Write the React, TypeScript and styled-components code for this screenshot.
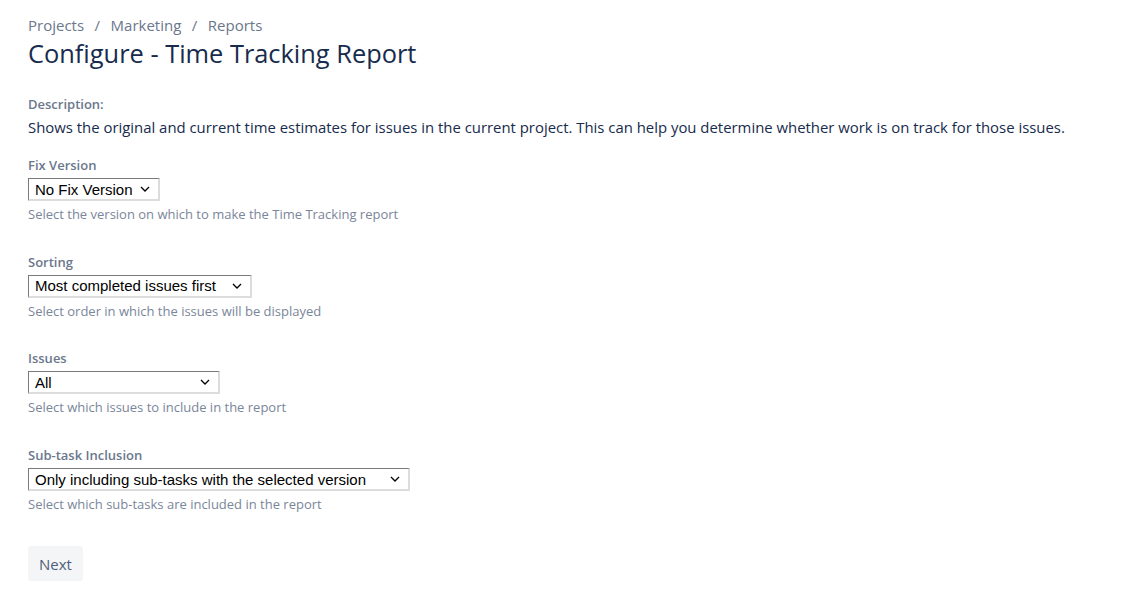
import React from "react";
import styled, { createGlobalStyle } from "styled-components";

const Global = createGlobalStyle`
  html, body { margin: 0; padding: 0; background: #fff; }
  body { font-family: "Open Sans", "Noto Sans", sans-serif; color: #172b4d; }
`;

const Page = styled.div`
  padding: 14px 28px 0 28px;
  display: flex;
  flex-direction: column;
`;

const Breadcrumbs = styled.nav`
  display: flex;
  align-items: center;
  font-size: 15px;
  line-height: 22px;
  color: #6b778c;
`;

const Sep = styled.span`
  padding: 0 10.5px;
`;

const Title = styled.h1`
  margin: 1px 0 0 0;
  font-size: 25.4px;
  font-weight: 400;
  line-height: 32px;
  color: #172b4d;
`;

const DescLabel = styled.div`
  margin-top: 26px;
  font-size: 13px;
  font-weight: 600;
  line-height: 18px;
  color: #6b778c;
`;

const DescText = styled.p`
  margin: 3px 0 0 0;
  font-size: 14.9px;
  line-height: 22px;
  color: #172b4d;
`;

const Field = styled.div<{ $first?: boolean }>`
  display: flex;
  flex-direction: column;
  align-items: flex-start;
  margin-top: ${(p) => (p.$first ? "18px" : "29.7px")};
`;

const Label = styled.label`
  font-size: 13px;
  font-weight: 600;
  line-height: 18px;
  color: #6b778c;
`;

const SelectBox = styled.div<{ $w: number }>`
  margin-top: 4px;
  box-sizing: border-box;
  width: ${(p) => p.$w}px;
  height: 23px;
  display: flex;
  align-items: center;
  justify-content: space-between;
  padding: 0 8px 0 6px;
  border-style: solid;
  border-width: 1px 2px 2px 1px;
  border-color: #7a7a7a #dcdcdc #dcdcdc #7a7a7a;
  font-family: "Liberation Sans", Arial, sans-serif;
  font-size: 15px;
  color: #000;
  background: #fff;
`;

const Help = styled.div`
  margin-top: 4px;
  font-size: 13px;
  line-height: 18px;
  color: #7a869a;
`;

const NextButton = styled.button`
  margin-top: 33px;
  align-self: flex-start;
  height: 35px;
  padding: 0 11px;
  border: none;
  border-radius: 3px;
  background: #f4f5f7;
  color: #505f79;
  font-family: "Open Sans", sans-serif;
  font-size: 15px;
`;

const Chevron = () => (
  <svg width="10" height="6" viewBox="0 0 10 6" fill="none">
    <path d="M1 1L5 5L9 1" stroke="#000" strokeWidth="1.3" />
  </svg>
);

const fields = [
  { label: "Fix Version", value: "No Fix Version", w: 132, help: "Select the version on which to make the Time Tracking report" },
  { label: "Sorting", value: "Most completed issues first", w: 224, help: "Select order in which the issues will be displayed" },
  { label: "Issues", value: "All", w: 192, help: "Select which issues to include in the report" },
  { label: "Sub-task Inclusion", value: "Only including sub-tasks with the selected version", w: 382, help: "Select which sub-tasks are included in the report" },
];

export default function App() {
  return (
    <>
      <Global />
      <Page>
        <Breadcrumbs>
          <span>Projects</span>
          <Sep>/</Sep>
          <span>Marketing</span>
          <Sep>/</Sep>
          <span>Reports</span>
        </Breadcrumbs>
        <Title>Configure - Time Tracking Report</Title>
        <DescLabel>Description:</DescLabel>
        <DescText>
          Shows the original and current time estimates for issues in the current project. This can help you determine whether work is on track for those issues.
        </DescText>
        {fields.map((f, i) => (
          <Field key={f.label} $first={i === 0}>
            <Label>{f.label}</Label>
            <SelectBox $w={f.w}>
              <span>{f.value}</span>
              <Chevron />
            </SelectBox>
            <Help>{f.help}</Help>
          </Field>
        ))}
        <NextButton>Next</NextButton>
      </Page>
    </>
  );
}
